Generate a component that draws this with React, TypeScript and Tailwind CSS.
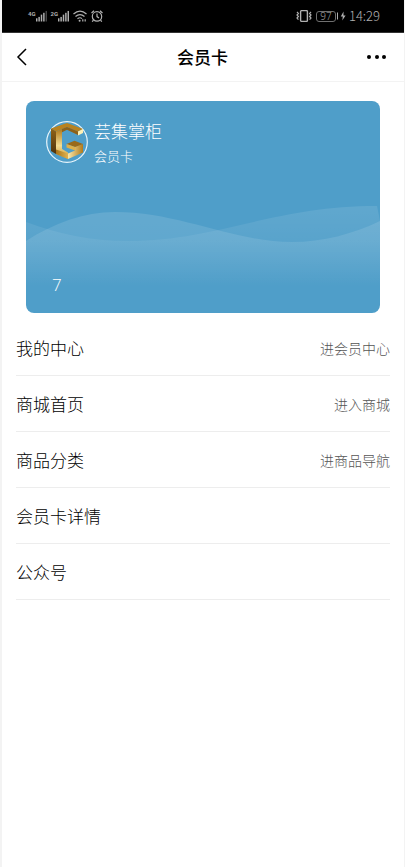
import { ChevronLeft } from "lucide-react";

type MenuItem = { label: string; hint?: string };

const MENU: MenuItem[] = [
  { label: "我的中心", hint: "进会员中心" },
  { label: "商城首页", hint: "进入商城" },
  { label: "商品分类", hint: "进商品导航" },
  { label: "会员卡详情" },
  { label: "公众号" },
];

function Signal({ label, faded }: { label: string; faded?: boolean }) {
  return (
    <div className="flex">
      <span className="font-[Roboto,sans-serif] text-[6px] leading-[7px] font-bold">{label}</span>
      <svg width="11" height="12" viewBox="0 0 12 12" fill="currentColor" className="shrink-0">
        <rect x="0" y="8.5" width="1.6" height="3.5" />
        <rect x="2.6" y="7" width="1.6" height="5" />
        <rect x="5.2" y="4.5" width="1.6" height="7.5" />
        <rect x="7.8" y="2.5" width="1.6" height="9.5" />
        <rect x="10.4" y="0.5" width="1.6" height="11.5" opacity={faded ? 0.4 : 1} />
      </svg>
    </div>
  );
}

function StatusBar() {
  return (
    <div className="flex h-8 items-center justify-between bg-black pl-[26px] pr-6 text-[#b0b0b0]">
      <div className="flex items-center gap-1">
        <Signal label="4G" faded />
        <Signal label="2G" />
        {/* Wi-Fi */}
        <svg width="14" height="12" viewBox="0 0 14 12" fill="none" stroke="currentColor" strokeWidth="1.2">
          <path d="M.5 4Q7-1.8 13.5 4M2.5 6.5Q7 2.6 11.5 6.5M4.5 8.8Q7 6.8 9 8.6" />
          <circle cx="6.6" cy="10.8" r="1" fill="currentColor" stroke="none" />
          <path d="M9.8 9.2v2.4M12.2 9.2v2.4" />
        </svg>
        {/* Alarm */}
        <svg width="12" height="12" viewBox="0 0 12 12" fill="none" stroke="currentColor" strokeWidth="1.2">
          <circle cx="6" cy="6.4" r="4.7" />
          <path d="M6 3.6v3l2 1.5M.5 3 3 .7M11.5 3 9 .7M2.5 10.2 1.2 11.7M9.5 10.2l1.3 1.5" />
        </svg>
      </div>
      <div className="flex items-center">
        {/* Vibrate */}
        <svg width="16" height="12" viewBox="0 0 16 12" fill="none" stroke="currentColor" className="mr-1">
          <rect x="4.6" y=".6" width="6.8" height="10.8" rx="1" strokeWidth="1.4" />
          <path d="M1 2l1.4 1.5L1 5l1.4 1.5L1 8l1.4 1.6M15 2l-1.4 1.5L15 5l-1.4 1.5L15 8l-1.4 1.6" strokeWidth="1.2" />
        </svg>
        <span className="flex h-[11px] w-5 items-center justify-center rounded-[3px] border border-[#707070] font-['Open_Sans',sans-serif] text-[10px] leading-none font-light">
          97
        </span>
        <svg width="11" height="10" viewBox="0 0 11 10" fill="currentColor" className="mr-0.5">
          <rect x="1" y="1.5" width="1" height="7" />
          <path d="M7.5.5 4.8 5.4h2L6.3 9.5 9.6 4.6H7.5z" />
        </svg>
        <span className="text-[13px] font-light leading-4">14:29</span>
      </div>
    </div>
  );
}

function Logo() {
  return (
    <svg width="42" height="42" viewBox="0 0 42 42" className="shrink-0" aria-hidden="true">
      <defs>
        <linearGradient id="goldColumn" x1="0" y1="0" x2="0" y2="1">
          <stop offset="0" stopColor="#b07a1c" />
          <stop offset=".55" stopColor="#f3dc92" />
          <stop offset="1" stopColor="#c9952f" />
        </linearGradient>
        <linearGradient id="goldArm" x1="0" y1="0" x2="1" y2="0">
          <stop offset="0" stopColor="#a87318" />
          <stop offset="1" stopColor="#e0b352" />
        </linearGradient>
        <linearGradient id="goldBase" x1="0" y1="0" x2="1" y2="0">
          <stop offset="0" stopColor="#fbe9ac" />
          <stop offset="1" stopColor="#b17a1a" />
        </linearGradient>
        <linearGradient id="goldSide" x1="0" y1="0" x2="0" y2="1">
          <stop offset="0" stopColor="#8f6218" />
          <stop offset="1" stopColor="#50330a" />
        </linearGradient>
      </defs>
      <circle cx="21" cy="21" r="20.3" fill="none" stroke="#e8f5fb" strokeWidth="1.2" />
      {/* top plane */}
      <path d="M5 7.5 21 2l16 6-5 2.4L21 6 10 10.5z" fill="#b8821f" />
      {/* left side */}
      <path d="M5 7.5l5 3V33l-5-3z" fill="url(#goldSide)" />
      {/* front faces */}
      <path d="M10 10.5l6-2.4v20l6 3.4V38l-12-5z" fill="url(#goldColumn)" />
      <path d="M16 8.1 21 6l11 4.4V14L21 8.8l-5 2.4z" fill="#8f6218" />
      <path d="M32 10.4 37 8v4l-5 2.5z" fill="#fff0b4" />
      <path d="M10 28.500l12 4V38l-12-5z" fill="url(#goldArm)" />
      <path d="M22 32.5l7-3v-4l8-2.500V31.5L22 38z" fill="url(#goldBase)" />
      {/* inner ledge */}
      <path d="M20.5 23 28.500 19.700 37 23l-8 3z" fill="#9a6919" />
      <path d="M20.5 23 29 26v3.500L20.5 26.600z" fill="#deb04a" />
    </svg>
  );
}

function Waves() {
  return (
    <svg viewBox="0 0 354 212" preserveAspectRatio="none" className="absolute inset-0 h-full w-full" aria-hidden="true">
      <defs>
        <linearGradient id="waveFront" gradientUnits="userSpaceOnUse" x1="0" y1="111" x2="0" y2="186">
          <stop offset="0" stopColor="#fff" stopOpacity=".12" />
          <stop offset=".4" stopColor="#fff" stopOpacity=".1" />
          <stop offset="1" stopColor="#fff" stopOpacity="0" />
        </linearGradient>
        <linearGradient id="waveBack" gradientUnits="userSpaceOnUse" x1="0" y1="105" x2="0" y2="184">
          <stop offset="0" stopColor="#fff" stopOpacity=".1" />
          <stop offset="1" stopColor="#fff" stopOpacity="0" />
        </linearGradient>
      </defs>
      <path d="M0 140C28 122 58 111 89 111c65 0 118 30 177 30 31 0 61-8 88-21v92H0z" fill="url(#waveFront)" />
      <path d="M0 121c32 12 65 19 102 19 89 0 145-35 249-35l3 15v92H0z" fill="url(#waveBack)" />
    </svg>
  );
}

function MemberCard() {
  return (
    <section className="relative mx-6 mt-[19px] flex h-[212px] flex-col justify-between overflow-hidden rounded-lg bg-[#4f9ec9] px-5 pb-4 pt-5 text-white">
      <Waves />
      <div className="relative flex items-start gap-1.5">
        <Logo />
        <div>
          <h2 className="text-[17px] font-light leading-5">芸集掌柜</h2>
          <p className="mt-[5px] text-[13px] font-light leading-5">会员卡</p>
        </div>
      </div>
      <p className="relative pl-1.5 font-['Open_Sans',sans-serif] text-[17px] font-light leading-6">7</p>
    </section>
  );
}

export default function App() {
  return (
    <div className="min-h-screen border-l-2 border-r border-[#f3f3f3] bg-white font-['Noto_Sans_CJK_SC',sans-serif] text-black">
      <StatusBar />
      <header className="flex h-[50px] items-center justify-between border-b border-t border-b-[#f3f3f3] border-t-[#333] pl-2 pr-[18px]">
        <button aria-label="返回" className="flex w-7 items-center">
          <svg width="24" height="24" viewBox="0 0 24 24" fill="none" stroke="currentColor" strokeWidth="1.5" className="shrink-0">
            <path d="M16 4 8 12l8 8" />
          </svg>
        </button>
        <h1 className="text-[17px] font-medium leading-6">会员卡</h1>
        <button aria-label="更多" className="flex w-[19px] items-center justify-between">
          <span className="size-1 rounded-full bg-black" />
          <span className="size-1 rounded-full bg-black" />
          <span className="size-1 rounded-full bg-black" />
        </button>
      </header>

      <main>
        <MemberCard />
        <ul className="mx-3.5 mt-[7px]">
          {MENU.map((item) => (
            <li key={item.label} className="border-b border-[#ededed]">
              <a href="#" className="flex h-[55px] items-center justify-between">
                <span className="text-[17px] font-light leading-6">{item.label}</span>
                {item.hint && <span className="text-sm leading-6 font-light text-[#555]">{item.hint}</span>}
              </a>
            </li>
          ))}
        </ul>
      </main>
    </div>
  );
}
